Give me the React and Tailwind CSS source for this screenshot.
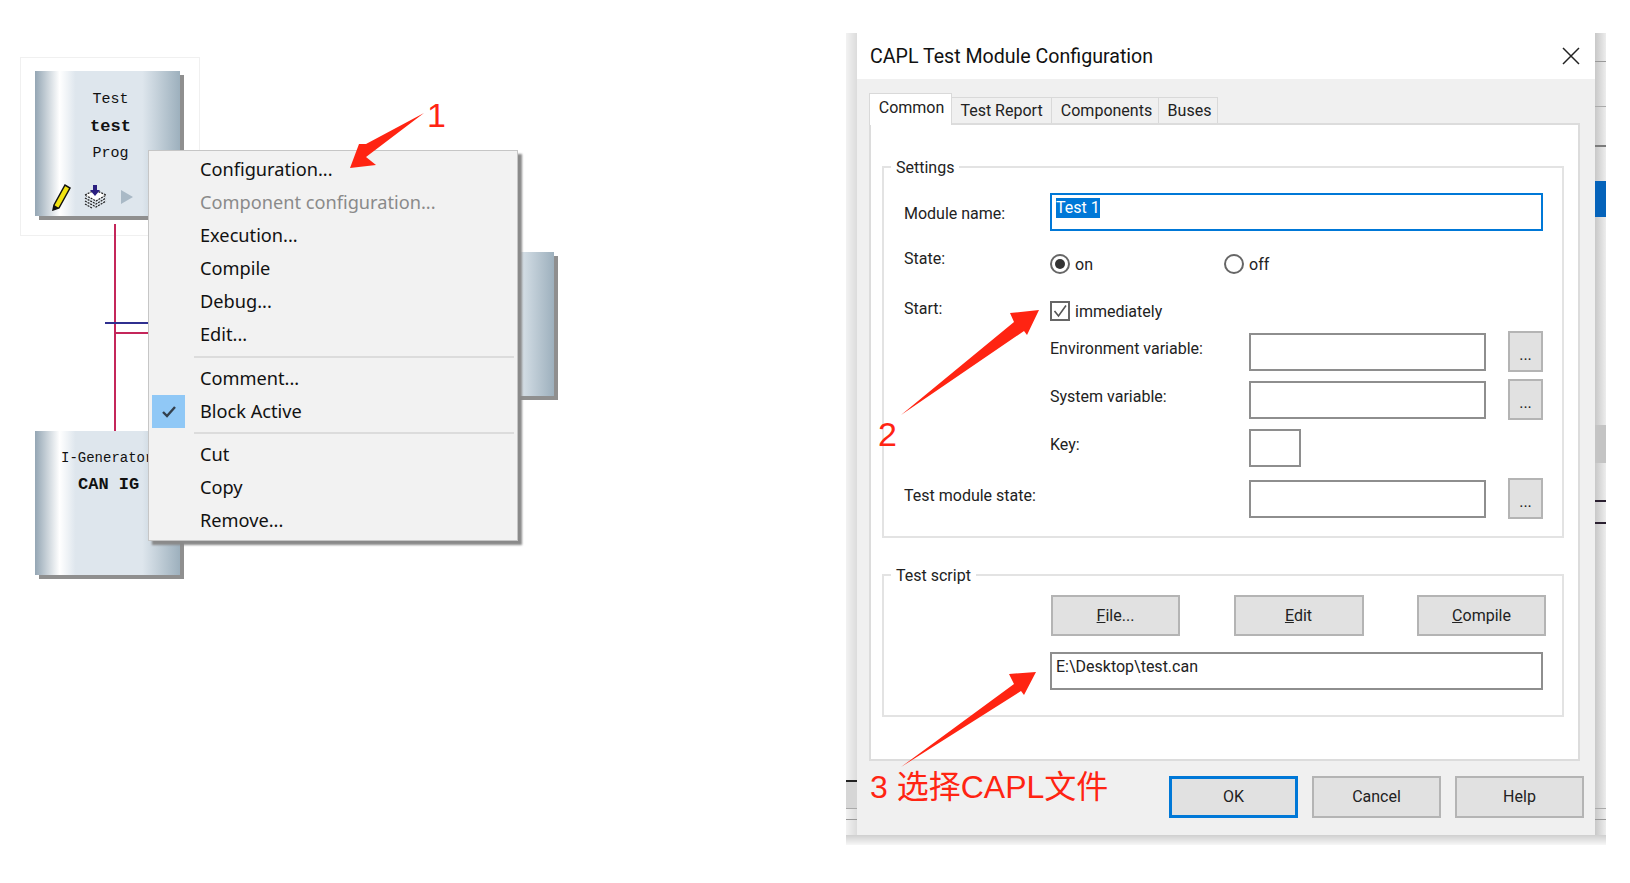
const MENU = [
  { label: 'Configuration...' },
  { label: 'Component configuration...', disabled: true },
  { label: 'Execution...' },
  { label: 'Compile' },
  { label: 'Debug...' },
  { label: 'Edit...' },
  { sep: 11 },
  { label: 'Comment...' },
  { label: 'Block Active', checked: true },
  { sep: 10 },
  { label: 'Cut' },
  { label: 'Copy' },
  { label: 'Remove...' },
]

const inputCls = 'h-[38px] border-2 border-[#8e8e8e] bg-white'
const btnBase = 'flex items-center justify-center bg-[#e1e1e1] text-[16px] text-[#222]'
const btnCls = `${btnBase} border-2 border-[#b4b4b4]`

function Block({ className, children }) {
  return (
    <div
      className={`absolute bg-[linear-gradient(90deg,#94a6b4_0%,#ffffff_17%,#dee6ed_28%,#dee6ed_74%,#9db0bd_100%)] shadow-[4px_4px_0_#8f8f8f] ${className}`}
    >
      {children}
    </div>
  )
}

function Diagram() {
  return (
    <div className="relative h-full w-[846px] shrink-0">
      <div className="absolute left-[20px] top-[57px] h-[179px] w-[180px] border border-[#f0f0f0]" />
      <div className="absolute left-[114px] top-[224px] h-[207px] w-[2px] bg-[#c4265a]" />
      <div className="absolute left-[105px] top-[322px] h-[2px] w-[44px] bg-[#2f2f8f]" />
      <div className="absolute left-[115px] top-[332px] h-[2px] w-[34px] bg-[#c4265a]" />

      <Block className="left-[35px] top-[71px] h-[145px] w-[145px] pl-[6px] text-center font-['Liberation_Mono',monospace] text-[#111]">
        <div className="mt-[19px] text-[15px] leading-[20px]">Test</div>
        <div className="mt-[7px] text-[17px] font-bold leading-[20px]">test</div>
        <div className="mt-[7px] text-[15px] leading-[20px]">Prog</div>
      </Block>
      <svg className="absolute left-[52px] top-[183px]" width="58" height="28" viewBox="0 0 58 28">
        <path d="M2 22 L13 2 L18 5 L7 25 L1 27 Z" fill="#f2e311" stroke="#111" strokeWidth="1.5" />
        <path d="M2 22 L7 25 L1 27 Z" fill="#111" />
        <path d="M33 12 L43 7 L54 12 L44 18 Z" fill="#fff" stroke="#222" strokeWidth="1.2" strokeDasharray="2 1" />
        <path d="M33 15 L44 21 L54 15 M33 18 L44 24 L54 18 M33 21 L40 25" fill="none" stroke="#222" strokeWidth="1.2" strokeDasharray="2 1" />
        <path d="M41 2 h4 v5 h3 l-5 6 l-5 -6 h3 Z" fill="#2b1f80" />
      </svg>
      <svg className="absolute left-[120px] top-[189px]" width="14" height="16" viewBox="0 0 14 16">
        <path d="M1 1 L13 8 L1 15 Z" fill="#a9b9c6" />
      </svg>

      <Block className="left-[35px] top-[431px] h-[144px] w-[145px] overflow-hidden pl-[26px] font-['Liberation_Mono',monospace] text-[#111]">
        <div className="mt-[18px] whitespace-nowrap text-[14px] leading-[18px]">I-Generator</div>
        <div className="ml-[17px] mt-[9px] whitespace-pre text-[17px] font-bold leading-[18px]">CAN IG</div>
      </Block>

      <Block className="left-[410px] top-[252px] h-[144px] w-[144px]" />

      <div className="absolute left-[148px] top-[150px] w-[370px] border border-[#c6c6c6] bg-[#f2f2f2] pb-[3px] pt-[2px] font-['Noto_Sans',sans-serif] text-[18.2px] text-[#111] shadow-[4px_4px_2px_#8a8a8a]">
        {MENU.map((m, i) =>
          m.sep ? (
            <div key={i} className={`flex items-center pl-[45px] pr-[3px] ${m.sep === 11 ? 'h-[11px]' : 'h-[10px]'}`}>
              <div className="h-[2px] w-full bg-[#dcdcdc]" />
            </div>
          ) : (
            <div key={i} className="relative flex h-[33px] items-center pl-[51px]">
              {m.checked && (
                <div className="absolute left-[3px] top-0 flex h-[33px] w-[33px] items-center justify-center bg-[#90c8f6]">
                  <svg width="16" height="14" viewBox="0 0 16 14">
                    <path d="M2 7 L6 11 L14 2" fill="none" stroke="#33404d" strokeWidth="2.4" />
                  </svg>
                </div>
              )}
              <span className={m.disabled ? 'text-[#8a8a8a]' : ''}>{m.label}</span>
            </div>
          ),
        )}
      </div>
    </div>
  )
}

function Group({ title, className, children }) {
  return (
    <div className={`relative border-2 border-[#e3e3e3] ${className}`}>
      <span className="absolute -top-[11px] left-[7px] bg-white px-[5px] leading-[22px]">{title}</span>
      {children}
    </div>
  )
}

function BrowseRow({ label, labelCls = 'ml-[146px] w-[199px]', rowCls, inputWidth = 'w-[237px]', browse = true }) {
  return (
    <div className={`flex h-[41px] items-center ${rowCls}`}>
      <span className={`mb-[5px] whitespace-nowrap leading-[22px] ${labelCls}`}>{label}</span>
      <div className={`${inputCls} ${inputWidth}`} />
      {browse && <div className={`${btnCls} ml-[22px] h-[41px] w-[35px] pt-[6px] text-[13px]`}>...</div>}
    </div>
  )
}

// scraps of the window behind the dialog, showing through its shadow
const SCRAPS = [
  'left-[749px] top-[28px] h-px w-[11px] bg-[#999]',
  'left-[749px] top-[73px] h-px w-[11px] bg-[#aaa]',
  'left-[749px] top-[112px] h-[2px] w-[11px] bg-[#7b7b7b]',
  'left-[749px] top-[148px] h-[36px] w-[11px] bg-[#0563ba]',
  'left-[749px] top-[392px] h-px w-[11px] bg-[#aaa]',
  'left-[749px] top-[392px] h-[38px] w-[11px] bg-[#c4c4c4]',
  'left-[749px] top-[467px] h-[2px] w-[11px] bg-[#2a2030]',
  'left-[749px] top-[489px] h-[2px] w-[11px] bg-[#2a2030]',
  'left-[749px] top-[775px] h-px w-[11px] bg-[#aaa]',
  'left-[749px] top-[786px] h-px w-[11px] bg-[#999]',
  'left-0 top-[747px] h-[2px] w-[11px] bg-[#222]',
  'left-0 top-[749px] h-[26px] w-[11px] bg-[#d6d6d6]',
  'left-0 top-[775px] h-px w-[11px] bg-[#aaa]',
  'left-0 top-[786px] h-px w-[11px] bg-[#999]',
]

function Dialog() {
  return (
    <div className="relative mt-[33px] h-[812px] w-[760px] shrink-0 bg-[linear-gradient(90deg,#f2f2f2,#dcdcdc_11px,#c8c8c8_749px,#ededed)] px-[11px]">
      {SCRAPS.map((s) => (
        <div key={s} className={`absolute ${s}`} />
      ))}
      <div className="absolute bottom-0 left-0 h-[10px] w-full bg-[linear-gradient(180deg,#cfcfcf,#f7f7f7)]" />
      <div className="relative h-[802px] w-[738px] bg-[#f0f0f0] font-['Roboto',sans-serif] text-[16px] text-[#222]">
        <div className="flex h-[46px] items-center justify-between bg-white pl-[13px] pr-[15px]">
          <span className="pt-[2px] text-[19.6px] text-[#111]">CAPL Test Module Configuration</span>
          <svg width="18" height="18" viewBox="0 0 18 18">
            <path d="M1 1 L17 17 M17 1 L1 17" stroke="#222" strokeWidth="1.5" />
          </svg>
        </div>
        <div className="ml-[12px] mt-[14px] flex h-[30px] items-end">
          <div className="relative z-10 -mb-[2px] flex h-[32px] w-[83px] items-center justify-center border border-b-0 border-[#d9d9d9] bg-white pb-[4px] pl-[2px]">
            Common
          </div>
          <div className="flex h-[26px] w-[100px] items-center justify-center border border-b-0 border-l-0 border-[#d9d9d9]">
            Test Report
          </div>
          <div className="flex h-[26px] w-[107px] items-center justify-center border border-b-0 border-l-0 border-[#d9d9d9] pl-[3px]">
            Components
          </div>
          <div className="flex h-[26px] w-[59px] items-center justify-center border border-b-0 border-l-0 border-[#d9d9d9] pl-[3px]">
            Buses
          </div>
        </div>
        <div className="ml-[12px] h-[638px] w-[711px] border-2 border-[#dcdcdc] bg-white pl-[11px] pt-[41px]">
          <Group title="Settings" className="h-[372px] w-[682px]">
            <div className="pl-[20px] pt-[25px]">
              <div className="flex items-center">
                <span className="w-[146px] pt-[4px]">Module name:</span>
                <div className="h-[38px] w-[493px] border-2 border-[#0078d7] px-[4px] pt-[3px]">
                  <span className="block w-fit bg-[#0078d7] leading-[20px] text-white">Test 1</span>
                </div>
              </div>
              <div className="mt-[15px] flex">
                <span className="w-[146px] pt-[2px] leading-[22px]">State:</span>
                <div className="mt-[6px] flex items-center">
                  <span className="flex h-[20px] w-[20px] items-center justify-center rounded-full border-2 border-[#666]">
                    <span className="h-[10px] w-[10px] rounded-full bg-[#333]" />
                  </span>
                  <span className="ml-[5px] w-[149px] pt-[2px] leading-[22px]">on</span>
                  <span className="h-[20px] w-[20px] rounded-full border-2 border-[#666]" />
                  <span className="ml-[5px] pt-[2px] leading-[22px]">off</span>
                </div>
              </div>
              <div className="mt-[20px] flex">
                <span className="w-[146px] pt-[2px] leading-[22px]">Start:</span>
                <div className="mt-[3px] flex items-center">
                  <svg width="20" height="20" viewBox="0 0 20 20">
                    <rect x="1" y="1" width="18" height="18" fill="#fff" stroke="#666" strokeWidth="2" />
                    <path d="M4.5 10 L8.5 15 L16 4.5" fill="none" stroke="#555" strokeWidth="1.6" />
                  </svg>
                  <span className="ml-[5px] pt-[2px] leading-[22px]">immediately</span>
                </div>
              </div>
              <BrowseRow label="Environment variable:" rowCls="mt-[8px]" />
              <BrowseRow label="System variable:" rowCls="mt-[7px]" />
              <BrowseRow label="Key:" rowCls="mt-[7px]" inputWidth="w-[52px]" browse={false} />
              <BrowseRow label="Test module state:" labelCls="w-[345px]" rowCls="mt-[10px]" />
            </div>
          </Group>
          <Group title="Test script" className="mt-[36px] h-[143px] w-[682px]">
            <div className="ml-[166px] pt-[19px]">
              <div className="ml-px flex w-[495px] justify-between">
                <div className={`${btnCls} h-[41px] w-[129px]`}>
                  <span><u>F</u>ile...</span>
                </div>
                <div className={`${btnCls} h-[41px] w-[130px]`}>
                  <span><u>E</u>dit</span>
                </div>
                <div className={`${btnCls} h-[41px] w-[129px]`}>
                  <span><u>C</u>ompile</span>
                </div>
              </div>
              <div className="mt-[16px] h-[38px] w-[493px] border-2 border-[#8e8e8e] px-[4px] pt-[2px] leading-[22px]">
                E:\Desktop\test.can
              </div>
            </div>
          </Group>
        </div>
        <div className="mt-[15px] flex justify-end gap-[14px] pr-[11px]">
          <div className={`${btnBase} h-[42px] w-[129px] border-[3px] border-[#0078d7]`}>OK</div>
          <div className={`${btnCls} h-[42px] w-[129px]`}>Cancel</div>
          <div className={`${btnCls} h-[42px] w-[129px]`}>Help</div>
        </div>
      </div>
    </div>
  )
}

function Annotations() {
  return (
    <>
      <svg className="pointer-events-none absolute left-0 top-0" width="1630" height="883" viewBox="0 0 1630 883">
        <g fill="#ff2412">
          <path d="M424 113 L366 144 L359 144 L350 168 L376 165 L366 157 Z" />
          <path d="M901 415 L1014 322 L1010 313 L1039 310 L1027 335 L1024 331 Z" />
          <path d="M901 767 L1014 684 L1009 674 L1036 672 L1024 695 L1021 691 Z" />
        </g>
      </svg>
      <span className="absolute left-[427px] top-[95px] font-['Liberation_Sans',sans-serif] text-[34px] leading-[40px] text-[#ff2412]">1</span>
      <span className="absolute left-[878px] top-[414px] font-['Liberation_Sans',sans-serif] text-[34px] leading-[40px] text-[#ff2412]">2</span>
      <span className="absolute left-[870px] top-[767px] whitespace-nowrap font-['Liberation_Sans','Noto_Sans_CJK_SC',sans-serif] text-[32px] leading-[40px] text-[#ff2412]">3 选择CAPL文件</span>
    </>
  )
}

export default function App() {
  return (
    <div className="relative flex h-[883px] w-[1630px] overflow-hidden bg-white">
      <Diagram />
      <Dialog />
      <Annotations />
    </div>
  )
}
